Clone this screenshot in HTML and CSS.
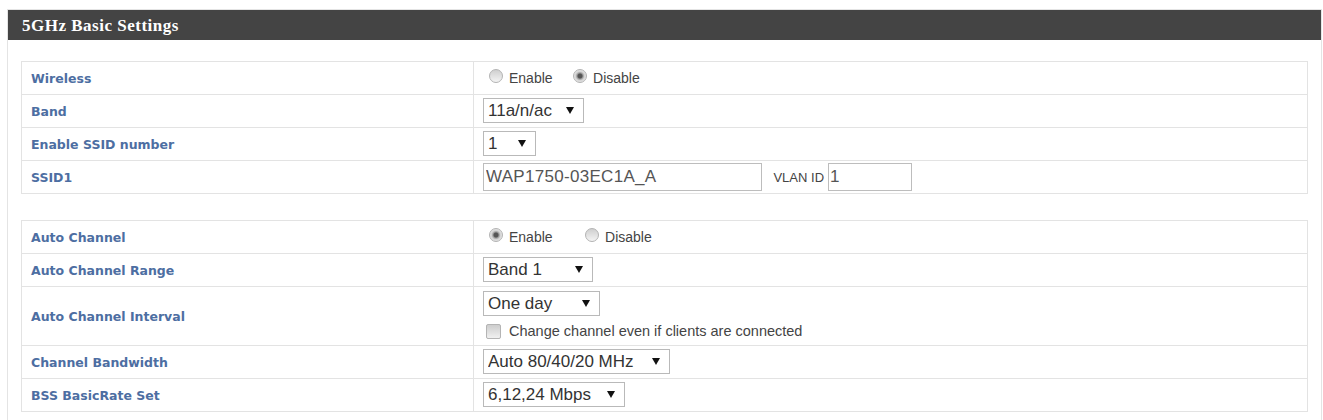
FILE: index.html
```html
<!DOCTYPE html>
<html>
  <head>
    <meta name="viewport" content="width=device-width,initial-scale=1.0">
    <title>5GHz Basic Settings</title>
    <link rel="stylesheet" href="styles.css">
  </head>
  <body>
    <div class="panel">
      <div class="panel-title">5GHz Basic Settings</div>
      <div class="panel-body">
        <table class="form-table">
          <tr>
            <td class="label">Wireless</td>
            <td class="field">
              <label class="opt"><input type="radio" name="wireless">Enable</label>
              <label class="opt"><input type="radio" name="wireless" checked>Disable</label>
            </td>
          </tr>
          <tr>
            <td class="label">Band</td>
            <td class="field">
              <span class="select"><select class="sel-band"><option>11a/n/ac</option></select></span>
            </td>
          </tr>
          <tr>
            <td class="label">Enable SSID number</td>
            <td class="field">
              <span class="select"><select class="sel-num"><option>1</option></select></span>
            </td>
          </tr>
          <tr>
            <td class="label">SSID1</td>
            <td class="field">
              <input type="text" class="text ssid" value="WAP1750-03EC1A_A">
              <span class="vlan">VLAN ID</span><input type="text" class="text vlan-id" value="1">
            </td>
          </tr>
        </table>

        <table class="form-table second">
          <tr>
            <td class="label">Auto Channel</td>
            <td class="field">
              <label class="opt wide"><input type="radio" name="autoch" checked>Enable</label>
              <label class="opt"><input type="radio" name="autoch">Disable</label>
            </td>
          </tr>
          <tr>
            <td class="label">Auto Channel Range</td>
            <td class="field">
              <span class="select"><select class="sel-range"><option>Band 1</option></select></span>
            </td>
          </tr>
          <tr>
            <td class="label">Auto Channel Interval</td>
            <td class="field tall">
              <span class="select"><select class="sel-interval"><option>One day</option></select></span>
              <label class="check"><input type="checkbox">Change channel even if clients are connected</label>
            </td>
          </tr>
          <tr>
            <td class="label">Channel Bandwidth</td>
            <td class="field">
              <span class="select"><select class="sel-bw"><option>Auto 80/40/20 MHz</option></select></span>
            </td>
          </tr>
          <tr>
            <td class="label">BSS BasicRate Set</td>
            <td class="field">
              <span class="select"><select class="sel-rate"><option>6,12,24 Mbps</option></select></span>
            </td>
          </tr>
        </table>
      </div>
    </div>
  </body>
</html>
```

FILE: styles.css
```css
body {
  margin: 0;
  background: #fff;
  font-family: "Liberation Sans", Arial, sans-serif;
  color: #444;
}

.panel {
  margin: 9px 1px 0 7px;
  border: 1px solid #e4e4e4;
  height: 420px;
}

.panel-title {
  height: 30px;
  padding-left: 14px;
  background: #444;
  color: #fff;
  font: bold 17px "Liberation Serif", serif;
  line-height: 31px;
  letter-spacing: 0.5px;
}

.panel-body {
  padding: 21px 13px 0 13px;
}

.form-table {
  width: 100%;
  border-collapse: collapse;
}

.form-table.second {
  margin-top: 26px;
}

.form-table td {
  border: 1px solid #e3e3e3;
  height: 32px;
  padding: 0;
  vertical-align: middle;
}

.label {
  width: 442px;
  padding-left: 9px !important;
  font: bold 12.5px "DejaVu Sans", Verdana, sans-serif;
  color: #4d6ea2;
}

.field {
  padding-left: 9px !important;
}

.field.tall {
  height: 50px;
  padding: 3px 0 5px 9px !important;
}

/* radio buttons */
.opt {
  display: inline-flex;
  align-items: center;
  font-size: 14px;
  color: #444;
  margin-right: 10px;
}

.opt.wide {
  margin-right: 22px;
}

.opt input {
  appearance: none;
  width: 14px;
  height: 14px;
  margin: 0 6px 4px 6px;
  border: 1px solid #b4b4b4;
  border-radius: 50%;
  background: linear-gradient(#cfcfcf, #f4f4f4);
}

.opt input:checked {
  background: radial-gradient(circle, #555 0 2px, #9a9a9a 3px, #d4d4d4 4.5px, #eee 7px);
}

/* drop-down boxes */
.select {
  position: relative;
  display: inline-block;
  vertical-align: middle;
}

.select::after {
  content: "";
  position: absolute;
  right: 10px;
  top: 9px;
  border-left: 4px solid transparent;
  border-right: 4px solid transparent;
  border-top: 7px solid #111;
}

.select select {
  appearance: none;
  display: block;
  height: 25px;
  margin: 0 0 1px 0;
  padding: 0 0 0 4px;
  border: 1px solid #b9b9b9;
  border-radius: 0;
  background: #fff;
  font: 17px "Liberation Sans", Arial, sans-serif;
  color: #333;
}

.sel-band { width: 101px; }
.sel-num { width: 53px; }
.sel-range { width: 110px; }
.sel-interval { width: 117px; }
.sel-bw { width: 187px; }
.sel-rate { width: 142px; }

/* text inputs */
.text {
  height: 28px;
  box-sizing: border-box;
  margin: 0;
  border: 1px solid #bdbdbd;
  padding: 0 2px;
  font: 17px "Liberation Sans", Arial, sans-serif;
  letter-spacing: 0.3px;
  color: #555;
  vertical-align: middle;
}

.ssid { width: 279px; }

.vlan {
  display: inline-block;
  margin: 0 4px 0 7px;
  font-size: 13px;
  color: #444;
  vertical-align: middle;
}

.vlan-id { width: 84px; padding-left: 1px; }

/* checkbox line */
.check {
  display: flex;
  align-items: center;
  margin-top: 6px;
  font-size: 14.5px;
  color: #444;
}

.check input {
  appearance: none;
  width: 15px;
  height: 15px;
  margin: 0 8px 0 3px;
  border: 1px solid #b4b4b4;
  border-radius: 2px;
  background: linear-gradient(#cdcdcd, #f0f0f0);
}
```
